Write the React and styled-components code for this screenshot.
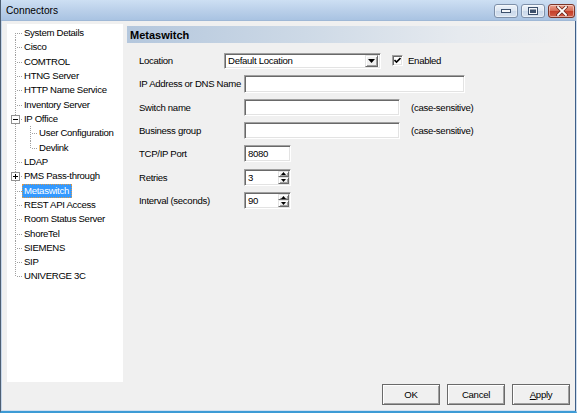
import React from "react";
import styled, { createGlobalStyle, css } from "styled-components";

const SANS = `"Liberation Sans", Arial, sans-serif`;

const GlobalStyle = createGlobalStyle`
  html, body { margin: 0; padding: 0; background: #f0f0f0; }
  body { font-family: ${SANS}; font-size: 9.6px; letter-spacing: -0.3px; color: #000; }
  * { box-sizing: border-box; }
`;

const tree = [
  { label: "System Details" },
  { label: "Cisco" },
  { label: "COMTROL" },
  { label: "HTNG Server" },
  { label: "HTTP Name Service" },
  { label: "Inventory Server" },
  { label: "IP Office", expander: "minus" },
  { label: "User Configuration", level: 1 },
  { label: "Devlink", level: 1, lastChild: true },
  { label: "LDAP" },
  { label: "PMS Pass-through", expander: "plus" },
  { label: "Metaswitch", selected: true },
  { label: "REST API Access" },
  { label: "Room Status Server" },
  { label: "ShoreTel" },
  { label: "SIEMENS" },
  { label: "SIP" },
  { label: "UNIVERGE 3C" },
];

const Window = styled.div`
  width: 577px;
  height: 413px;
  display: flex;
  flex-direction: column;
  background: #f0f0f0;
  border-left: 1px solid #4e5f73;
  border-right: 1px solid #d0dff0;
  border-bottom: 2px solid #3d9bd5;
  box-shadow: inset 1px 0 #c5d6ea, inset -1px 0 #3f5f88, inset 0 -1px #cfdff0;
  overflow: hidden;
`;

const TitleBar = styled.div`
  flex: none;
  height: 21px;
  display: flex;
  justify-content: space-between;
  background: linear-gradient(#cddff3, #b9cfe9 55%, #a9c3e2);
  border-bottom: 1px solid #9fb8d6;
`;

const Title = styled.span`
  padding-left: 5px;
  line-height: 21px;
  font-size: 10.2px;
  letter-spacing: 0;
`;

const Caption = styled.div`
  display: flex;
  gap: 3px;
  margin: 4px 1px 0 0;
`;

const CaptionButton = styled.div`
  width: ${(p) => (p.$close ? 27 : 24)}px;
  height: 14px;
  border-radius: 3px;
  display: flex;
  align-items: center;
  justify-content: center;
  border: 1px solid ${(p) => (p.$close ? "#7b3528" : "#7d8fa8")};
  background: ${(p) =>
    p.$close
      ? "linear-gradient(#eba391, #d66a52 50%, #c43d27 51%, #d3604a)"
      : "linear-gradient(#eef3f9, #dbe5f1 50%, #cad8ea 51%, #d8e3f0)"};
  box-shadow: inset 0 0 0 1px rgba(255, 255, 255, 0.45);
`;

const Client = styled.div`
  flex: none;
  height: 361px;
  display: flex;
  padding: 3px 7px 0 6px;
`;

const Tree = styled.div`
  width: 116px;
  flex: none;
  background: #fff;
  padding-top: 2px;
`;

const Row = styled.div`
  height: 14.32px;
  display: flex;
  align-items: center;
`;

const Gutter = styled.span`
  position: relative;
  flex: none;
  width: 15px;
  height: 100%;
  &::before {
    content: "";
    display: ${(p) => (p.$vTop || p.$vBottom ? "block" : "none")};
    position: absolute;
    left: 8px;
    width: 1px;
    top: ${(p) => (p.$vTop ? "0" : "50%")};
    bottom: ${(p) => (p.$vBottom ? "0" : "50%")};
    background: repeating-linear-gradient(to bottom, #a0a0a0 0 1px, transparent 1px 2px);
  }
  &::after {
    content: "";
    display: ${(p) => (p.$h ? "block" : "none")};
    position: absolute;
    left: 9px;
    width: 6px;
    top: 50%;
    height: 1px;
    background: repeating-linear-gradient(to right, transparent 0 1px, #a0a0a0 1px 2px);
  }
`;

const Expander = styled.svg`
  position: absolute;
  left: 4px;
  top: 50%;
  margin-top: -4px;
  z-index: 1;
`;

const ItemLabel = styled.span`
  height: 14px;
  line-height: 12px;
  padding: 0 2px 0 1px;
  white-space: nowrap;
  border: 1px ${(p) => (p.$selected ? "dotted #d99a4e" : "solid transparent")};
  background: ${(p) => (p.$selected ? "#3399ff" : "transparent")};
  color: ${(p) => (p.$selected ? "#fff" : "#000")};
`;

const Panel = styled.div`
  flex: 1;
  margin-left: 4px;
  padding-top: 2px;
`;

const PanelHeader = styled.div`
  height: 17px;
  padding-left: 3px;
  display: flex;
  align-items: center;
  font: bold 11px ${SANS};
  letter-spacing: 0;
  background: linear-gradient(to right, #b4c7dd 0%, #cdd9e6 40%, #e6eaef 75%, #f0f0f0 100%);
`;

const Form = styled.div`
  padding-top: 6px;
`;

const Field = styled.div`
  height: 23.3px;
  display: flex;
  align-items: center;
  padding-left: 12px;
`;

const Label = styled.span`
  flex: none;
  width: ${(p) => p.$w}px;
  white-space: nowrap;
`;

const sunken = css`
  background: #fff;
  border-style: solid;
  border-width: 1px;
  border-color: #a0a0a0 #fff #fff #a0a0a0;
  box-shadow: inset 1px 1px #696969, inset -1px -1px #e3e3e3;
`;

const raised = css`
  background: #f0f0f0;
  border-style: solid;
  border-width: 1px;
  border-color: #e3e3e3 #696969 #696969 #e3e3e3;
  box-shadow: inset 1px 1px #fff, inset -1px -1px #a0a0a0;
`;

const TextBox = styled.div`
  ${sunken};
  width: ${(p) => p.$w}px;
  height: ${(p) => p.$h || 17}px;
  display: flex;
  align-items: center;
  padding: 0 ${(p) => (p.$spin ? 0 : 3)}px 0 3px;
`;

const Value = styled.span`
  flex: 1;
  white-space: nowrap;
`;

const Combo = styled.div`
  ${sunken};
  width: 157px;
  height: 16px;
  display: flex;
  align-items: center;
  padding: 2px 2px 2px 3px;
`;

const ArrowButton = styled.div`
  ${raised};
  width: 13px;
  height: 12px;
  display: flex;
  align-items: center;
  justify-content: center;
`;

const SpinColumn = styled.div`
  display: flex;
  flex-direction: column;
  margin-right: 1px;
`;

const SpinButton = styled.div`
  ${raised};
  width: 11px;
  height: 6.5px;
  display: flex;
  align-items: center;
  justify-content: center;
`;

const Check = styled.div`
  ${sunken};
  width: 11px;
  height: 11px;
  margin-left: 11px;
  display: flex;
  align-items: center;
  justify-content: center;
`;

const Note = styled.span`
  margin-left: ${(p) => p.$gap || 11}px;
  white-space: nowrap;
`;

const Footer = styled.div`
  flex: none;
  display: flex;
  justify-content: flex-end;
  gap: 7px;
  padding: 2px 6px 0 0;
`;

const Button = styled.div`
  width: 58px;
  height: 21px;
  display: flex;
  align-items: center;
  justify-content: center;
  border: 1px solid #6a6a6a;
  background: #f0f0f0;
  box-shadow: inset 1px 1px #fff, inset -1px -1px #a0a0a0;
  u { text-decoration: underline; }
`;

const Tri = ({ up }) => (
  <svg width="5" height="3" viewBox="0 0 5 3">
    <path d={up ? "M2.5 0 L5 3 L0 3 Z" : "M0 0 L5 0 L2.5 3 Z"} fill="#000" />
  </svg>
);

function Spin({ value }) {
  return (
    <TextBox $w={47} $spin>
      <Value>{value}</Value>
      <SpinColumn>
        <SpinButton><Tri up /></SpinButton>
        <SpinButton><Tri /></SpinButton>
      </SpinColumn>
    </TextBox>
  );
}

function TreeRow({ item, first, last }) {
  const exp = item.expander && (
    <Expander width="9" height="9" viewBox="0 0 9 9">
      <rect x="0.5" y="0.5" width="8" height="8" fill="#fff" stroke="#919191" />
      <path d="M2 4.5 H7" stroke="#000" />
      {item.expander === "plus" && <path d="M4.5 2 V7" stroke="#000" />}
    </Expander>
  );
  return (
    <Row>
      {item.level ? (
        <>
          <Gutter $vTop $vBottom />
          <Gutter $vTop $vBottom={!item.lastChild} $h />
        </>
      ) : (
        <Gutter $vTop={!first} $vBottom={!last} $h>
          {exp}
        </Gutter>
      )}
      <ItemLabel $selected={item.selected}>{item.label}</ItemLabel>
    </Row>
  );
}

export default function App() {
  return (
    <>
      <GlobalStyle />
      <Window>
        <TitleBar>
          <Title>Connectors</Title>
          <Caption>
            <CaptionButton>
              <svg width="10" height="4" viewBox="0 0 10 4">
                <rect x="0.5" y="0.5" width="9" height="3" fill="#f4f6f9" stroke="#3b4f6b" />
              </svg>
            </CaptionButton>
            <CaptionButton>
              <svg width="10" height="8" viewBox="0 0 10 8">
                <rect x="0.5" y="0.5" width="9" height="7" fill="#f4f6f9" stroke="#3b4f6b" />
                <rect x="2" y="2.5" width="6" height="3.5" fill="#3b4f6b" />
              </svg>
            </CaptionButton>
            <CaptionButton $close>
              <svg width="12" height="10" viewBox="0 0 12 10">
                <path d="M2 1 L10 9 M10 1 L2 9" stroke="#6b2a20" strokeWidth="3.4" strokeLinecap="square" />
                <path d="M2 1 L10 9 M10 1 L2 9" stroke="#fff" strokeWidth="1.8" strokeLinecap="square" />
              </svg>
            </CaptionButton>
          </Caption>
        </TitleBar>

        <Client>
          <Tree>
            {tree.map((item, i) => (
              <TreeRow key={item.label} item={item} first={i === 0} last={i === tree.length - 1} />
            ))}
          </Tree>

          <Panel>
            <PanelHeader>Metaswitch</PanelHeader>
            <Form>
              <Field>
                <Label $w={85}>Location</Label>
                <Combo>
                  <Value>Default Location</Value>
                  <ArrowButton>
                    <svg width="7" height="4" viewBox="0 0 7 4">
                      <path d="M0 0 H7 L3.5 4 Z" fill="#000" />
                    </svg>
                  </ArrowButton>
                </Combo>
                <Check>
                  <svg width="7" height="7" viewBox="0 0 7 7">
                    <path d="M0.5 3 L2.5 5 L6.5 1" stroke="#000" strokeWidth="1.6" fill="none" />
                  </svg>
                </Check>
                <Note $gap={5}>Enabled</Note>
              </Field>
              <Field>
                <Label $w={105}>IP Address or DNS Name</Label>
                <TextBox $w={221} $h={18} />
              </Field>
              <Field>
                <Label $w={105}>Switch name</Label>
                <TextBox $w={156} />
                <Note>(case-sensitive)</Note>
              </Field>
              <Field>
                <Label $w={105}>Business group</Label>
                <TextBox $w={156} />
                <Note>(case-sensitive)</Note>
              </Field>
              <Field>
                <Label $w={105}>TCP/IP Port</Label>
                <TextBox $w={47}>
                  <Value>8080</Value>
                </TextBox>
              </Field>
              <Field>
                <Label $w={105}>Retries</Label>
                <Spin value="3" />
              </Field>
              <Field>
                <Label $w={105}>Interval (seconds)</Label>
                <Spin value="90" />
              </Field>
            </Form>
          </Panel>
        </Client>

        <Footer>
          <Button>OK</Button>
          <Button>Cancel</Button>
          <Button><span><u>A</u>pply</span></Button>
        </Footer>
      </Window>
    </>
  );
}
